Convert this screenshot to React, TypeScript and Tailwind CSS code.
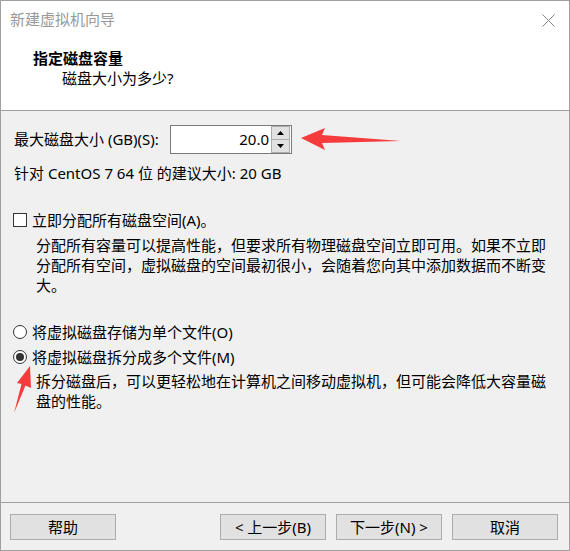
import React from "react";

function Radio({ checked }: { checked?: boolean }) {
  return (
    <span className="w-[14px] h-[14px] rounded-full border border-[#333] bg-white flex items-center justify-center shrink-0">
      {checked && <span className="w-[8px] h-[8px] rounded-full bg-[#333]"></span>}
    </span>
  );
}

function Btn({ children }: { children: React.ReactNode }) {
  return (
    <div className="w-[106px] h-[26px] bg-[#e1e1e1] border border-[#adadad] flex items-center justify-center text-black">
      {children}
    </div>
  );
}

export default function App() {
  return (
    <div className="relative w-[570px] h-[551px] bg-[#f0f0f0] border border-[#a0a0a0] flex flex-col font-[family-name:'Noto_Sans','Noto_Sans_CJK_SC',sans-serif] text-[15px] text-black overflow-hidden">
      {/* Header */}
      <div className="h-[110px] bg-white border-b border-[#a0a0a0] shrink-0">
        <div className="h-[37px] flex items-center justify-between pl-[9px] pr-[14px]">
          <span className="text-[#999]">新建虚拟机向导</span>
          <svg width="13" height="13" viewBox="0 0 13 13" className="mt-[1px]">
            <path d="M0.5 0.5 L12.5 12.5 M12.5 0.5 L0.5 12.5" stroke="#888" strokeWidth="1" />
          </svg>
        </div>
        <div className="mt-[10px] pl-[32px] leading-[20px] font-bold">指定磁盘容量</div>
        <div className="pl-[61px] leading-[20px]">磁盘大小为多少?</div>
      </div>

      {/* Body */}
      <div className="flex-1 pl-[13px] pr-[12px]">
        <div className="mt-[14px] flex items-center">
          <span className="w-[156px] whitespace-nowrap">最大磁盘大小 (GB)(S):</span>
          <div className="w-[122px] h-[29px] bg-white border border-[#7a7a7a] flex items-center">
            <span className="flex-1 text-right pr-[2px]">20.0</span>
            <div className="w-[19px] h-[27px] flex flex-col mr-[1px]">
              <div className="flex-1 bg-[#e1e1e1] border border-[#adadad] flex items-center justify-center">
                <svg width="7" height="4" viewBox="0 0 7 4"><path d="M0 4 L3.5 0 L7 4 Z" fill="#000" /></svg>
              </div>
              <div className="flex-1 bg-[#e1e1e1] border border-[#adadad] border-t-0 flex items-center justify-center">
                <svg width="7" height="4" viewBox="0 0 7 4"><path d="M0 0 L3.5 4 L7 0 Z" fill="#000" /></svg>
              </div>
            </div>
          </div>
        </div>
        <div className="mt-[9px] leading-[20px]">针对 CentOS 7 64 位 的建议大小: 20 GB</div>

        <div className="mt-[27px] h-[20px] flex items-center">
          <span className="w-[14px] h-[14px] border border-[#333] bg-white -ml-[1px] shrink-0"></span>
          <span className="ml-[5px]">立即分配所有磁盘空间(A)。</span>
        </div>
        <div className="mt-[5px] pl-[22px] leading-[20px] whitespace-nowrap">
          分配所有容量可以提高性能，但要求所有物理磁盘空间立即可用。如果不立即
          <br />
          分配所有空间，虚拟磁盘的空间最初很小，会随着您向其中添加数据而不断变
          <br />
          大。
        </div>

        <div className="mt-[27px] h-[20px] flex items-center">
          <span className="-ml-[1px]"><Radio /></span>
          <span className="ml-[5px]">将虚拟磁盘存储为单个文件(O)</span>
        </div>
        <div className="mt-[5px] h-[20px] flex items-center">
          <span className="-ml-[1px]"><Radio checked /></span>
          <span className="ml-[5px]">将虚拟磁盘拆分成多个文件(M)</span>
        </div>
        <div className="mt-[4px] pl-[22px] leading-[20px] whitespace-nowrap">
          拆分磁盘后，可以更轻松地在计算机之间移动虚拟机，但可能会降低大容量磁
          <br />
          盘的性能。
        </div>
      </div>

      {/* Footer */}
      <div className="h-[48px] border-t border-[#a0a0a0] shrink-0 flex items-start justify-between pl-[9px] pr-[11px] pt-[11px]">
        <Btn>帮助</Btn>
        <div className="flex gap-[10px]">
          <Btn>&lt; 上一步(B)</Btn>
          <Btn>下一步(N) &gt;</Btn>
          <Btn>取消</Btn>
        </div>
      </div>

      {/* Red annotation arrows */}
      <svg className="absolute left-0 top-0 pointer-events-none" width="570" height="551" viewBox="0 0 570 551">
        <path d="M300 137 L324 127 L321 134 L400 140 L321 142 L324 149 Z" fill="#f53b3b" />
        <path d="M29 365 L30 387 L24.5 384.5 L13 412 L20.5 383 L16 382 Z" fill="#f53b3b" />
      </svg>
    </div>
  );
}
